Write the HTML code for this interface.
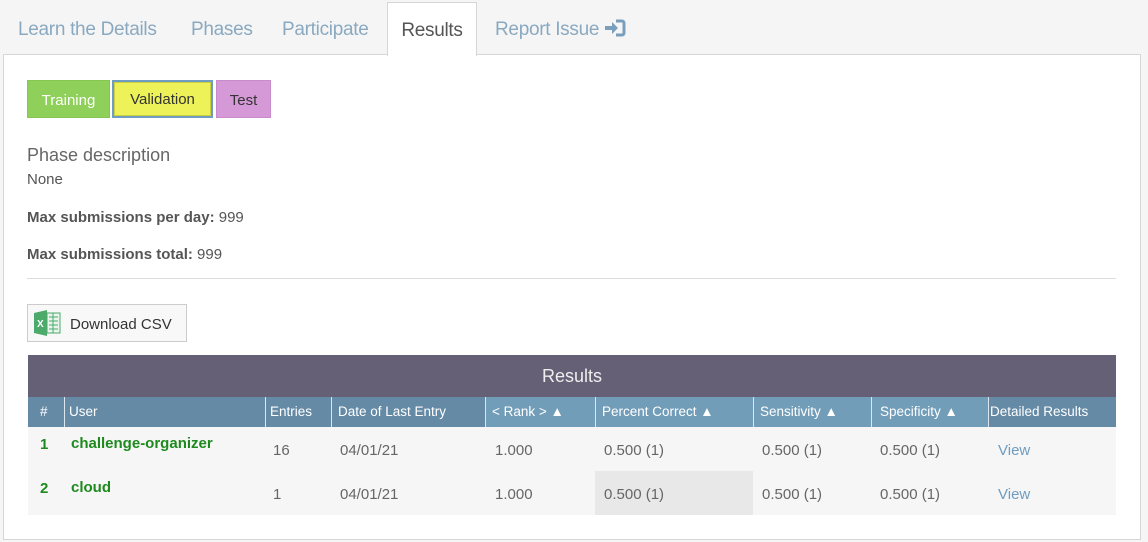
<!DOCTYPE html>
<html><head><meta charset="utf-8"><style>
*{box-sizing:border-box;margin:0;padding:0}
body{width:1148px;height:542px;background:#f5f5f5;font-family:"Liberation Sans",sans-serif;color:#555;position:relative;overflow:hidden;white-space:nowrap}
.tab{position:absolute;top:19px;font-size:19px;color:#8aa9c0;letter-spacing:-0.3px}
.box{position:absolute;left:3px;top:54px;width:1138px;height:486px;background:#fff;border:1px solid #d6d6d6}
.acttab{position:absolute;left:387px;top:2px;width:90px;height:54px;background:#fff;border:1px solid #d6d6d6;border-bottom:none;font-size:19px;color:#555;text-align:center;padding-top:17px;letter-spacing:-0.3px}
.btn{position:absolute;top:80px;height:38px;font-size:15px;text-align:center;line-height:39px}
.abs{position:absolute}
.cell{position:absolute;white-space:nowrap}
</style></head><body>
<div class="tab" style="left:18px">Learn the Details</div>
<div class="tab" style="left:191px">Phases</div>
<div class="tab" style="left:282px">Participate</div>
<div class="box"></div>
<div class="acttab">Results</div>
<div class="tab" style="left:495px">Report Issue <svg width="22" height="18" viewBox="0 0 22 18" style="vertical-align:-2px"><path d="M1 7h7V3l6 6-6 6v-4H1z" fill="#7a9fbc"/><path d="M12 2h6a2 2 0 0 1 2 2v10a2 2 0 0 1-2 2h-6" fill="none" stroke="#7a9fbc" stroke-width="3"/></svg></div>

<div class="btn" style="left:27px;width:83px;background:#8fd05a;color:#fff;border:1px solid #86c653">Training</div>
<div class="btn" style="left:112px;width:101px;background:#ecf257;color:#333;border:2px solid #6f9cbf;box-shadow:inset 0 0 0 1px #c9cf3e;line-height:36px">Validation</div>
<div class="btn" style="left:216px;width:55px;background:#d699d8;color:#333;border:1px solid #c88bcb">Test</div>

<div class="abs" style="left:27px;top:145px;font-size:18px;color:#666">Phase description</div>
<div class="abs" style="left:27px;top:171px;font-size:15px">None</div>
<div class="abs" style="left:27px;top:209px;font-size:15px"><b>Max submissions per day:</b> 999</div>
<div class="abs" style="left:27px;top:246px;font-size:15px"><b>Max submissions total:</b> 999</div>
<div class="abs" style="left:27px;top:278px;width:1089px;height:1px;background:#ddd"></div>

<div class="abs" style="left:27px;top:304px;width:160px;height:38px;border:1px solid #ccc;background:#f8f8f8;font-size:15px;color:#333;padding:11px 0 0 42px">Download CSV</div>
<svg class="abs" style="left:34px;top:310px" width="28" height="26" viewBox="0 0 28 26"><path d="M0 3l13-3v26L0 23z" fill="#4caa6a"/><rect x="13" y="3" width="13" height="20" fill="#e9f5ec" stroke="#4caa6a"/><path d="M15 7h9M15 11h9M15 15h9M15 19h9M19 3v20" stroke="#4caa6a" stroke-width="1"/><text x="3" y="17" font-size="10" font-weight="bold" fill="#fff" font-family="Liberation Sans">X</text></svg>

<div class="abs" style="left:28px;top:355px;width:1088px;height:42px;background:#666076;color:#eee;font-size:18px;text-align:center;line-height:43px">Results</div>
<div class="abs" style="left:28px;top:397px;width:1088px;height:30px;background:#648aa6"></div>
<div class="abs" style="left:485px;top:397px;width:503px;height:30px;background:#729db9"></div>
<div class="abs" style="left:28px;top:427px;width:1088px;height:88px;background:#f6f6f6"></div>
<div class="abs" style="left:595px;top:471px;width:158px;height:44px;background:#e8e8e8"></div>
<div style="position:absolute;top:397px;left:0;font-size:13.5px;color:#fff">
<div class="cell" style="left:40px;top:7px">#</div>
<div class="cell" style="left:64px;top:0;height:30px;border-left:1px solid #dce6ee;padding:7px 0 0 4px">User</div>
<div class="cell" style="left:265px;top:0;height:30px;border-left:1px solid #dce6ee;padding:7px 0 0 4px">Entries</div>
<div class="cell" style="left:331px;top:0;height:30px;border-left:1px solid #dce6ee;padding:7px 0 0 6px">Date of Last Entry</div>
<div class="cell" style="left:485px;top:0;height:30px;border-left:1px solid #dce6ee;padding:7px 0 0 6px">&lt; Rank &gt; ▲</div>
<div class="cell" style="left:595px;top:0;height:30px;border-left:1px solid #dce6ee;padding:7px 0 0 6px">Percent Correct ▲</div>
<div class="cell" style="left:753px;top:0;height:30px;border-left:1px solid #dce6ee;padding:7px 0 0 6px">Sensitivity ▲</div>
<div class="cell" style="left:871px;top:0;height:30px;border-left:1px solid #dce6ee;padding:7px 0 0 8px">Specificity ▲</div>
<div class="cell" style="left:988px;top:0;height:30px;border-left:1px solid #dce6ee;padding:7px 0 0 1px">Detailed Results</div>
</div>
<div style="position:absolute;top:1px;left:0;font-size:15px;color:#666">
<div class="cell" style="left:40px;top:435px;color:#1e8a1e;font-weight:bold">1</div>
<div class="cell" style="left:71px;top:434px;color:#1e8a1e;font-weight:bold">challenge-organizer</div>
<div class="cell" style="left:273px;top:441px">16</div>
<div class="cell" style="left:340px;top:441px">04/01/21</div>
<div class="cell" style="left:495px;top:441px">1.000</div>
<div class="cell" style="left:604px;top:441px">0.500 (1)</div>
<div class="cell" style="left:762px;top:441px">0.500 (1)</div>
<div class="cell" style="left:880px;top:441px">0.500 (1)</div>
<div class="cell" style="left:998px;top:441px;color:#6f9cbf">View</div>
<div class="cell" style="left:40px;top:479px;color:#1e8a1e;font-weight:bold">2</div>
<div class="cell" style="left:71px;top:478px;color:#1e8a1e;font-weight:bold">cloud</div>
<div class="cell" style="left:273px;top:485px">1</div>
<div class="cell" style="left:340px;top:485px">04/01/21</div>
<div class="cell" style="left:495px;top:485px">1.000</div>
<div class="cell" style="left:604px;top:485px">0.500 (1)</div>
<div class="cell" style="left:762px;top:485px">0.500 (1)</div>
<div class="cell" style="left:880px;top:485px">0.500 (1)</div>
<div class="cell" style="left:998px;top:485px;color:#6f9cbf">View</div>
</div>
</body></html>
